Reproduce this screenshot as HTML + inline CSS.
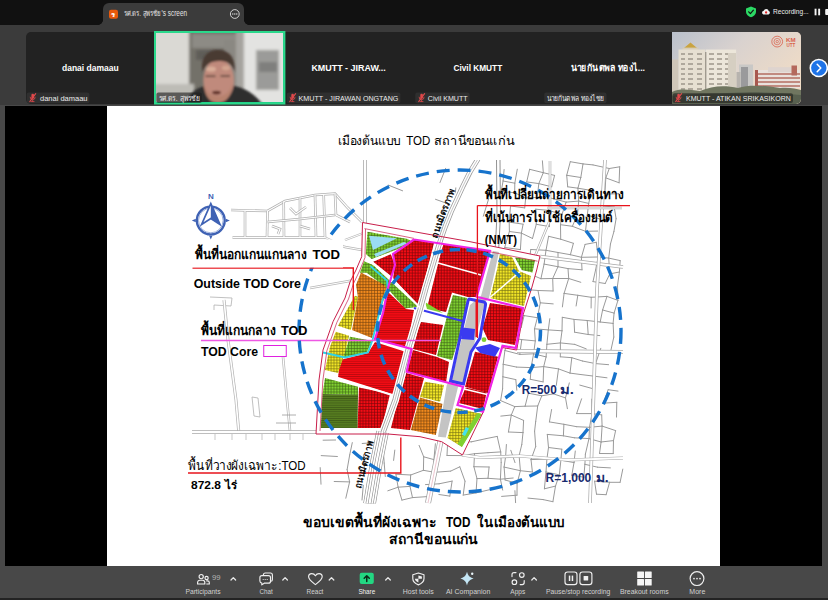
<!DOCTYPE html>
<html lang="th">
<head>
<meta charset="utf-8">
<title>Zoom Meeting</title>
<style>
*{box-sizing:border-box;margin:0;padding:0}
html,body{width:828px;height:600px;overflow:hidden;background:#3a3a3a;font-family:"Liberation Sans","Noto Sans CJK SC",sans-serif;color:#fff}
#app{position:relative;width:828px;height:600px;overflow:hidden;background:#484848}
#gbg{left:0;top:25px;width:828px;height:80px;background:#3b3b3b}
.abs{position:absolute}
#topbar{left:0;top:0;width:828px;height:25px;background:#111}
#tab{left:103px;top:3px;width:141px;height:23px;background:#3b3b3b;border-radius:6px 6px 0 0}
#tab:before,#tab:after{content:"";position:absolute;bottom:1px;width:5px;height:5px;background:radial-gradient(circle at 0 0,#111 4.6px,#3b3b3b 5.2px)}
#tab:before{left:-5px}
#tab:after{right:-5px;transform:scaleX(-1)}
.tile{top:32px;height:72px;background:#222}
#stage{left:5px;top:106px;width:817px;height:460px;background:#000}
#slide{left:107px;top:106px;width:613px;height:460px;background:#fff;color:#000}
#toolbar{left:0;top:566px;width:828px;height:34px;background:#484848;border-bottom:2px solid #232323}
</style>
</head>
<body>
<div id="app">
  <div id="topbar" class="abs"></div>
  <div id="gbg" class="abs"></div>
  <div id="tab" class="abs"></div>
  <div id="gallery">
    <div class="tile abs" style="left:26px;width:775px;border-radius:5px"></div>
    <div class="tile abs" id="t1" style="left:26px;width:129px;background:none">
    </div>
    <div class="tile abs" id="t2" style="left:154px;width:131px;top:31px;height:73px;background:#999;border:2px solid #23d18b"></div>
    <div class="tile abs" id="t3" style="left:285px;width:129px;background:none">
    </div>
    <div class="tile abs" id="t4" style="left:414px;width:129px;background:none">
    </div>
    <div class="tile abs" id="t5" style="left:543px;width:129px;background:none">
    </div>
    <div class="tile abs" id="t6" style="left:672px;width:129px;background:#c9b9a6;border-radius:0 5px 5px 0;overflow:hidden">
    </div>
  </div>
  <div id="stage" class="abs"></div>
  <div id="slide" class="abs"></div>
  <div id="toolbar" class="abs"></div>
  <svg id="map" class="abs" style="left:0;top:0" width="828" height="600" viewBox="0 0 828 600">
<!--MAP_START-->
<defs><pattern id="grid" width="2.9" height="2.9" patternUnits="userSpaceOnUse"><path d="M0 0.4H2.9M0.4 0V2.9" stroke="#000" stroke-width="0.7" opacity="0.5"/></pattern>
<pattern id="hl" width="2.6" height="2.2" patternUnits="userSpaceOnUse"><path d="M0 0.4H2.6" stroke="#000" stroke-width="0.6" opacity="0.36"/></pattern></defs>
<clipPath id="mapclip"><rect x="186" y="160" width="446" height="343.5"/></clipPath><g clip-path="url(#mapclip)">
<path d="M504.1 169.5L503.1 181.0M503.1 181.0L514.8 183.2M503.1 181.0L501.2 191.3M501.2 191.3L514.7 192.8M517.3 169.2L514.8 183.2M514.8 183.2L514.7 192.8M514.7 192.8L525.7 197.9M510.5 206.0L524.7 207.9M510.5 206.0L509.2 222.1M509.2 222.1L523.1 224.2M509.2 222.1L509.4 231.5M509.4 231.5L521.4 233.1M509.4 231.5L504.7 247.5M504.7 247.5L520.4 249.6M505.6 258.8L517.2 259.1M503.2 284.7L501.7 298.6M529.6 169.3L543.3 172.7M529.6 169.3L526.7 181.9M526.7 181.9L538.8 183.6M525.7 197.9L537.3 197.4M525.7 197.9L524.7 207.9M523.1 224.2L521.4 233.1M521.4 233.1L532.5 238.5M521.4 233.1L520.4 249.6M514.7 273.6L530.7 274.4M514.7 273.6L516.1 287.4M515.0 298.4L510.5 313.4M510.5 313.4L524.1 315.6M510.6 324.9L521.2 327.5M510.6 324.9L509.2 337.6M509.2 337.6L521.7 339.6M509.2 337.6L504.9 350.5M504.9 350.5L519.8 354.4M504.9 350.5L503.2 364.3M503.2 364.3L516.6 367.1M503.2 364.3L502.9 376.8M502.9 376.8L515.8 379.6M502.9 376.8L502.6 388.8M502.6 388.8L500.6 400.6M500.6 400.6L514.8 406.6M500.8 416.1L511.3 415.0M542.4 160.8L543.3 172.7M543.3 172.7L554.6 175.4M543.3 172.7L538.8 183.6M538.8 183.6L551.7 186.8M538.8 183.6L537.3 197.4M535.8 209.2L548.6 210.4M535.8 209.2L536.3 224.3M536.3 224.3L549.5 226.6M536.3 224.3L532.5 238.5M530.8 249.5L546.0 250.3M530.8 249.5L528.9 263.7M530.7 274.4L540.9 278.7M530.7 274.4L528.4 289.7M528.4 289.7L538.0 290.5M524.1 315.6L537.4 317.7M524.1 315.6L521.2 327.5M521.7 339.6L535.3 340.9M521.7 339.6L519.8 354.4M519.8 354.4L533.6 353.8M516.6 367.1L531.1 367.6M515.8 379.6L516.8 390.2M514.8 406.6L525.1 406.2M514.8 406.6L511.3 415.0M511.3 415.0L523.6 420.4M511.3 415.0L508.4 432.0M508.4 432.0L523.0 432.6M506.4 444.5L505.6 456.7M505.6 456.7L519.1 455.7M505.6 456.7L504.1 467.1M504.1 467.1L520.4 470.7M504.1 467.1L505.1 480.0M505.1 480.0L517.1 483.4M501.6 496.4L517.0 495.2M554.6 175.4L551.7 186.8M550.8 198.1L566.1 202.1M550.8 198.1L548.6 210.4M548.6 210.4L562.0 214.4M548.6 210.4L549.5 226.6M548.6 236.3L560.7 239.2M548.6 236.3L546.0 250.3M546.0 250.3L558.0 252.5M546.0 250.3L544.1 264.1M544.1 264.1L558.0 266.7M544.1 264.1L540.9 278.7M540.9 278.7L552.7 278.5M538.0 290.5L553.1 291.0M538.0 290.5L540.3 302.8M540.3 302.8L553.2 303.9M540.3 302.8L537.4 317.7M537.4 317.7L534.5 328.8M534.5 328.8L548.3 329.9M534.5 328.8L535.3 340.9M535.3 340.9L533.6 353.8M533.6 353.8L546.1 356.9M533.6 353.8L531.1 367.6M531.1 367.6L543.7 366.6M531.1 367.6L530.3 379.3M530.3 379.3L543.1 381.9M528.4 393.2L541.8 395.8M528.4 393.2L525.1 406.2M525.1 406.2L537.7 406.0M523.6 420.4L523.0 432.6M523.0 432.6L521.8 444.5M521.8 444.5L519.1 455.7M519.1 455.7L520.4 470.7M520.4 470.7L532.4 472.0M520.4 470.7L517.1 483.4M517.1 483.4L517.0 495.2M570.3 161.7L583.0 163.9M570.3 161.7L566.7 175.3M566.7 175.3L580.8 177.5M566.7 175.3L567.7 186.8M567.7 186.8L577.9 188.2M566.1 202.1L578.7 201.1M566.1 202.1L562.0 214.4M562.0 214.4L560.5 224.7M560.5 224.7L572.4 226.3M560.5 224.7L560.7 239.2M560.7 239.2L573.4 243.3M558.0 252.5L570.4 254.7M558.0 252.5L558.0 266.7M558.0 266.7L568.0 268.6M558.0 266.7L552.7 278.5M552.7 278.5L568.7 278.5M552.7 278.5L553.1 291.0M549.8 318.7L548.3 329.9M548.3 329.9L562.0 330.8M548.3 329.9L546.9 344.3M546.9 344.3L560.4 342.9M546.9 344.3L546.1 356.9M546.1 356.9L543.7 366.6M543.7 366.6L558.5 368.9M543.7 366.6L543.1 381.9M541.8 395.8L553.5 393.9M541.8 395.8L537.7 406.0M537.7 406.0L535.7 421.5M535.7 421.5L534.6 431.2M534.6 431.2L535.7 446.5M535.7 446.5L531.0 459.6M531.0 459.6L546.9 459.0M531.0 459.6L532.4 472.0M528.0 498.1L543.2 499.6M583.0 163.9L593.0 164.9M583.0 163.9L580.8 177.5M580.8 177.5L577.9 188.2M577.9 188.2L591.6 190.5M577.9 188.2L578.7 201.1M578.7 201.1L588.7 203.4M578.7 201.1L577.5 214.3M577.5 214.3L572.4 226.3M572.4 226.3L585.5 231.3M573.4 243.3L570.4 254.7M570.4 254.7L581.4 257.3M568.0 268.6L582.0 269.8M568.0 268.6L568.7 278.5M568.7 278.5L580.8 282.3M568.7 278.5L564.1 293.4M564.1 293.4L577.8 295.3M564.1 293.4L562.4 306.9M562.3 317.3L574.0 319.4M562.3 317.3L562.0 330.8M562.0 330.8L560.4 342.9M560.4 342.9L574.8 344.4M560.4 342.9L560.3 356.8M560.3 356.8L571.8 357.7M558.5 368.9L570.0 373.1M558.5 368.9L556.3 385.4M553.5 393.9L565.5 397.9M551.6 409.5L549.4 421.9M549.4 421.9L563.9 424.3M547.3 434.4L563.4 435.8M547.3 434.4L548.5 447.5M548.5 447.5L561.8 449.2M548.5 447.5L546.9 459.0M546.9 459.0L560.9 460.2M546.9 459.0L546.0 472.0M546.0 472.0L559.3 474.9M546.0 472.0L544.4 488.8M544.4 488.8L555.5 486.1M543.2 499.6L552.9 501.7M593.0 164.9L609.3 168.5M591.6 190.5L588.7 203.4M588.7 203.4L587.3 215.1M587.3 215.1L602.6 219.9M587.3 215.1L585.5 231.3M585.5 231.3L597.6 231.1M585.1 244.4L596.3 242.3M585.1 244.4L581.4 257.3M581.4 257.3L598.1 257.0M581.4 257.3L582.0 269.8M577.8 295.3L591.2 297.3M577.8 295.3L576.1 306.0M574.0 319.4L587.2 320.5M574.0 319.4L574.6 332.2M574.6 332.2L588.2 334.5M574.8 344.4L586.3 348.9M571.8 357.7L582.4 361.0M571.8 357.7L570.0 373.1M570.0 373.1L580.5 374.5M569.3 382.9L565.5 397.9M565.5 397.9L567.4 408.7M563.9 424.3L576.7 426.7M563.9 424.3L563.4 435.8M563.4 435.8L574.4 437.8M561.8 449.2L560.9 460.2M560.9 460.2L574.0 462.6M560.9 460.2L559.3 474.9M559.3 474.9L555.5 486.1M555.5 486.1L552.9 501.7M609.3 168.5L619.7 166.8M609.3 168.5L605.8 177.9M605.8 177.9L619.1 182.8M605.8 177.9L604.9 194.2M604.9 194.2L618.7 193.7M602.1 205.9L614.2 207.0M602.1 205.9L602.6 219.9M596.3 242.3L598.1 257.0M598.1 257.0L608.7 258.1M598.1 257.0L595.6 269.9M595.6 269.9L593.0 281.6M593.0 281.6L605.2 283.5M591.2 297.3L607.0 296.4M591.2 297.3L591.1 308.0M587.2 320.5L600.2 322.0M587.2 320.5L588.2 334.5M588.2 334.5L599.8 335.6M582.4 361.0L595.6 363.6M580.5 374.5L595.2 376.3M579.8 385.1L594.4 389.1M581.6 398.8L576.6 413.6M576.6 413.6L592.0 413.6M576.7 426.7L589.5 427.3M574.4 437.8L589.0 438.6M575.3 451.0L574.0 462.6M574.0 462.6L571.8 475.3M571.8 475.3L583.8 477.2M619.7 166.8L619.1 182.8M614.2 207.0L616.1 218.7M616.1 218.7L613.9 231.6M613.9 231.6L610.5 243.8M610.5 243.8L608.7 258.1M608.7 258.1L620.2 260.6M608.7 258.1L609.8 273.9M609.8 273.9L619.4 272.0M609.8 273.9L605.2 283.5M607.0 296.4L617.9 300.4M607.0 296.4L602.6 310.0M602.6 310.0L614.1 313.1M602.6 310.0L600.2 322.0M600.2 322.0L613.1 323.4M600.8 348.3L595.6 363.6M595.6 363.6L608.6 364.7M595.6 363.6L595.2 376.3M595.2 376.3L607.0 377.8M595.2 376.3L594.4 389.1M591.8 399.1L592.0 413.6M592.0 413.6L601.7 414.9M592.0 413.6L589.5 427.3M589.5 427.3L602.1 426.1M589.5 427.3L589.0 438.6M589.0 438.6L601.1 442.0M589.0 438.6L585.4 454.1M585.4 454.1L584.9 464.3M584.9 464.3L597.6 467.2M584.9 464.3L583.8 477.2M620.2 260.6L619.4 272.0M619.4 272.0L617.5 285.6M617.5 285.6L617.9 300.4M617.9 300.4L614.1 313.1M614.1 313.1L613.1 323.4M613.1 323.4L613.8 337.1M613.8 337.1L610.8 350.8M608.2 389.7L618.0 391.1M608.2 389.7L603.1 403.2M603.1 403.2L616.8 402.3M601.7 414.9L602.1 426.1M602.1 426.1L615.6 430.6M602.1 426.1L601.1 442.0M601.1 442.0L613.5 440.6M601.1 442.0L599.5 453.5M599.5 453.5L613.2 453.6M597.6 467.2L610.4 467.9M594.6 481.2L609.6 482.3M594.6 481.2L596.5 494.2M596.5 494.2L606.1 494.7M616.8 402.3L616.5 417.1M615.6 430.6L613.5 440.6M613.5 440.6L613.2 453.6M609.6 482.3L620.1 482.3M609.6 482.3L606.1 494.7M622.8 469.1L620.1 482.3M383.4 452.1L384.2 463.1M384.2 463.1L385.3 476.5M387.8 490.8L398.1 487.2M394.8 450.1L393.6 460.4M395.9 474.2L410.7 475.0M395.9 474.2L398.1 487.2M398.1 487.2L410.0 486.4M398.1 487.2L401.9 500.1M401.9 500.1L412.5 497.6M410.7 475.0L423.4 470.3M410.7 475.0L410.0 486.4M410.0 486.4L412.5 497.6M412.5 497.6L427.5 496.6M419.1 445.4L423.7 456.8M423.7 456.8L433.9 459.6M423.7 456.8L423.4 470.3M423.4 470.3L434.5 472.3M425.5 484.6L439.1 483.8M435.4 443.7L433.9 459.6M433.9 459.6L434.5 472.3M434.5 472.3L450.7 471.1M439.1 483.8L452.1 481.1M438.9 494.5L449.8 496.1M447.6 443.5L457.3 442.3M447.6 443.5L447.0 455.5M447.0 455.5L462.2 455.6M450.7 471.1L459.8 466.8M452.1 481.1L449.8 496.1M457.3 442.3L471.6 441.8M457.3 442.3L462.2 455.6M462.2 455.6L474.5 453.7M459.8 466.8L465.0 481.2M465.0 481.2L463.2 495.1M463.2 495.1L476.0 492.9M471.6 441.8L486.2 438.6M474.5 453.7L488.0 452.7M474.5 453.7L473.9 466.7M473.9 466.7L489.1 467.0M473.9 466.7L477.0 478.6M477.0 478.6L488.0 478.3M477.0 478.6L476.0 492.9M476.0 492.9L489.6 489.7M486.2 438.6L497.2 436.4M488.0 452.7L500.7 451.9M489.1 467.0L488.0 478.3M488.0 478.3L500.4 479.2M497.2 436.4L500.7 451.9M500.7 451.9L501.2 462.4M501.2 462.4L500.4 479.2M500.4 479.2L513.2 478.0M500.4 479.2L502.7 490.1M510.8 450.3L515.0 462.6M514.9 490.7L515.6 502.7M388.3 185.1L402.6 190.8M445.7 168.3L440.0 182.5M435.5 199.3L454.4 206.1M455.8 187.9L454.4 206.1M445.8 221.5L440.2 238.4M488.8 198.4L483.3 216.2M323.1 440.2L335.6 440.0M321.2 455.6L337.4 456.5M320.2 467.6L321.0 484.2M334.2 481.5L349.6 481.9M352.3 442.6L349.7 454.9M349.7 454.9L347.1 469.6M347.1 469.6L349.6 481.9M349.6 481.9L345.8 498.2M362.2 443.5L376.9 442.4M363.5 454.7L364.5 470.5M363.3 485.3L362.0 500.0M375.4 471.9L378.0 484.2M378.0 484.2L373.6 500.8" fill="none" stroke="#9a9a9a" stroke-width="1" stroke-linecap="round"/>
<polyline points="231,210 267.5,211 285,201 315,195 335,193.7 347.5,207.5 362,222" fill="none" stroke="#b0b0b0" stroke-width="2.6" />
<polyline points="231,210 267.5,211 285,201 315,195 335,193.7 347.5,207.5 362,222" fill="none" stroke="#fff" stroke-width="1.2" />
<polyline points="232.5,237.5 325,237.5" fill="none" stroke="#b0b0b0" stroke-width="2.6" />
<polyline points="232.5,237.5 325,237.5" fill="none" stroke="#fff" stroke-width="1.2" />
<polyline points="245,211 245,237" fill="none" stroke="#b0b0b0" stroke-width="2.6" />
<polyline points="245,211 245,237" fill="none" stroke="#fff" stroke-width="1.2" />
<polyline points="267.5,211 267,237" fill="none" stroke="#b0b0b0" stroke-width="2.6" />
<polyline points="267.5,211 267,237" fill="none" stroke="#fff" stroke-width="1.2" />
<polyline points="283.7,202 284,237" fill="none" stroke="#b0b0b0" stroke-width="2.6" />
<polyline points="283.7,202 284,237" fill="none" stroke="#fff" stroke-width="1.2" />
<polyline points="300,198 300,237" fill="none" stroke="#b0b0b0" stroke-width="2.6" />
<polyline points="300,198 300,237" fill="none" stroke="#fff" stroke-width="1.2" />
<polyline points="315,195 316,237" fill="none" stroke="#b0b0b0" stroke-width="2.6" />
<polyline points="315,195 316,237" fill="none" stroke="#fff" stroke-width="1.2" />
<polyline points="323.7,195 325,237" fill="none" stroke="#b0b0b0" stroke-width="2.6" />
<polyline points="323.7,195 325,237" fill="none" stroke="#fff" stroke-width="1.2" />
<polyline points="267.5,222 300,219 335,215" fill="none" stroke="#b0b0b0" stroke-width="2.6" />
<polyline points="267.5,222 300,219 335,215" fill="none" stroke="#fff" stroke-width="1.2" />
<polyline points="335,193.7 336,215 350,222" fill="none" stroke="#b0b0b0" stroke-width="2.6" />
<polyline points="335,193.7 336,215 350,222" fill="none" stroke="#fff" stroke-width="1.2" />
<polyline points="290,208 296,214 306,207" fill="none" stroke="#b0b0b0" stroke-width="2.6" />
<polyline points="290,208 296,214 306,207" fill="none" stroke="#fff" stroke-width="1.2" />
<polyline points="272,226 280,229 278,234" fill="none" stroke="#b0b0b0" stroke-width="2.6" />
<polyline points="272,226 280,229 278,234" fill="none" stroke="#fff" stroke-width="1.2" />
<polyline points="300,226 310,229" fill="none" stroke="#b0b0b0" stroke-width="2.6" />
<polyline points="300,226 310,229" fill="none" stroke="#fff" stroke-width="1.2" />
<polyline points="310,288 355,280" fill="none" stroke="#b8b8b8" stroke-width="2.4" />
<polyline points="310,288 355,280" fill="none" stroke="#fff" stroke-width="1" />
<polyline points="345,240 365,232.5" fill="none" stroke="#b8b8b8" stroke-width="2.4" />
<polyline points="345,240 365,232.5" fill="none" stroke="#fff" stroke-width="1" />
<polyline points="325,237.5 345,247 362,250" fill="none" stroke="#b8b8b8" stroke-width="2.4" />
<polyline points="325,237.5 345,247 362,250" fill="none" stroke="#fff" stroke-width="1" />
<polyline points="210,297 232,298 231,306 214,305 214,310" fill="none" stroke="#b0b0b0" stroke-width="0.8" />
<polyline points="224,300 228,340 236,400 238.7,431" fill="none" stroke="#b4b4b4" stroke-width="3" />
<polyline points="224,300 228,340 236,400 238.7,431" fill="none" stroke="#fff" stroke-width="1.6" />
<polyline points="283,357 287,400 290,431" fill="none" stroke="#b4b4b4" stroke-width="2.6" />
<polyline points="283,357 287,400 290,431" fill="none" stroke="#fff" stroke-width="1.2" />
<polyline points="252,397 258,398 260,417 254,416 252,397" fill="none" stroke="#b0b0b0" stroke-width="0.8" />
<polyline points="282,415 296,415" fill="none" stroke="#999" stroke-width="0.8" />
<polyline points="276,423 296,423" fill="none" stroke="#999" stroke-width="0.8" />
<polyline points="192,432 316,432" fill="none" stroke="#a8a8a8" stroke-width="3.4" />
<polyline points="192,432 316,432" fill="none" stroke="#fff" stroke-width="2" />
<polyline points="215,434 215,440" fill="none" stroke="#b0b0b0" stroke-width="0.7" />
<polyline points="232,434 232,440" fill="none" stroke="#b0b0b0" stroke-width="0.7" />
<polyline points="246,434 246,440" fill="none" stroke="#b0b0b0" stroke-width="0.7" />
<polyline points="262,434 262,440" fill="none" stroke="#b0b0b0" stroke-width="0.7" />
<polyline points="275,434 275,440" fill="none" stroke="#b0b0b0" stroke-width="0.7" />
<polyline points="290,434 290,440" fill="none" stroke="#b0b0b0" stroke-width="0.7" />
<polyline points="303,434 303,440" fill="none" stroke="#b0b0b0" stroke-width="0.7" />
<polyline points="365,160 365,223" fill="none" stroke="#a0a0a0" stroke-width="4" />
<polyline points="365,160 365,223" fill="none" stroke="#fff" stroke-width="2.6" />
<polyline points="540,256.5 623,267" fill="none" stroke="#a8a8a8" stroke-width="3.6" />
<polyline points="540,256.5 623,267" fill="none" stroke="#fff" stroke-width="2.2" />
<polyline points="517,351 623,352" fill="none" stroke="#a8a8a8" stroke-width="4" />
<polyline points="517,351 623,352" fill="none" stroke="#fff" stroke-width="2.6" />
<polyline points="605,160 597,290 590,503" fill="none" stroke="#a8a8a8" stroke-width="3.6" />
<polyline points="605,160 597,290 590,503" fill="none" stroke="#fff" stroke-width="2.2" />
<polyline points="462,455 480,457.5 520,456 568,460 623,458" fill="none" stroke="#a8a8a8" stroke-width="3.2" />
<polyline points="462,455 480,457.5 520,456 568,460 623,458" fill="none" stroke="#fff" stroke-width="1.8" />
<polyline points="550,161 550,220 535,256" fill="none" stroke="#b0b0b0" stroke-width="2.6" />
<polyline points="550,161 550,220 535,256" fill="none" stroke="#fff" stroke-width="1.2" />
<polyline points="547,208 622,208" fill="none" stroke="#b0b0b0" stroke-width="2.4" />
<polyline points="547,208 622,208" fill="none" stroke="#fff" stroke-width="1" />
<polyline points="496.5,160 497,215 495,252" fill="none" stroke="#777" stroke-width="0.8" />
<polyline points="500,160 500.5,215 498.5,252" fill="none" stroke="#777" stroke-width="0.8" />
<polyline points="441.5,436 428,503" fill="none" stroke="#9a9a9a" stroke-width="6" />
<polyline points="441.5,436 428,503" fill="none" stroke="#fff" stroke-width="4.6" />
<polyline points="441.5,436 428,503" fill="none" stroke="#e0a0b0" stroke-width="0.6" />
<polygon points="362.5,222.5 470,241.7 540,256 536.7,270 531.7,288 523,315 516.7,350 502,347.5 492.5,380 483,412.5 462.5,455 441.7,441.7 420,436.7 388,434 316,434 319,380 323,350 333,321.7 345,298 350,282 356,270 361.7,256.7" fill="#fff" />
<polygon points="367.5,231.7 407.5,239 411,241 400,248.3 371.7,259 365.8,254" fill="#80d030" />
<polygon points="373.3,261.7 390.8,254.2 395,265 391,276" fill="#f40c14" />
<polygon points="364,261.3 373,265 389.3,280.2 418,306.8 405,308.4 388,289 366.7,272.8 360,272.8" fill="#80d030" />
<polygon points="361,272.6 384,284.4 387,289 372,338 352,330 358,297 356,285" fill="#f28a1e" />
<polygon points="355,295.8 358,296.7 350.8,330 338,325.8 348,308" fill="#f2e626" />
<polygon points="414,240 434,243 422,290 419,305 393,279 395,265 393,254" fill="#f40c14" />
<polygon points="388,292 406,309 414,310 407,347 375,339 383,313" fill="#f40c14" />
<polygon points="443,244 490,251 477,297 468,297 452,292.5 446,312 427,308 432,288" fill="#f40c14" />
<polygon points="453,295 467,298 463,325 452,360 437,356 448,312" fill="#80d030" />
<polygon points="490,303 523,308 515,345 488,340 482.5,328" fill="#f40c14" />
<polygon points="475,351.7 498,356.7 488,393 465,386.7" fill="#f40c14" />
<polygon points="465.8,387.5 486.7,392.5 483,409 459,403" fill="#f40c14" />
<polygon points="500,254 512,257 519,271 531,276 524,306 490,298 497,270" fill="#f2e626" />
<polygon points="515,257.5 535,260 532.5,272.5 521.7,270" fill="#80d030" />
<polygon points="340,360 368,353 375,342 406,352 396,392 392,394 338,378" fill="#f40c14" />
<polygon points="359,387.5 390,394 381.7,428 357.5,428" fill="#f40c14" />
<polygon points="325,378 358,386.7 358,395 322.5,394" fill="#80d030" />
<polygon points="322.5,394 358,395 357.5,428 320.8,428" fill="#567c20" />
<polygon points="335.8,331.7 349,335.8 345,353 338,373 325,370 330,346.7" fill="#f2e626" />
<polygon points="350,336.7 371.7,340.8 366.7,353 343,358 346.7,346.7" fill="#80d030" />
<polygon points="413,350 437,357 449,362 446,382 407,371.7" fill="#f40c14" />
<polygon points="421,322 443,325 436,355 413,349 418,330" fill="#f40c14" />
<polygon points="406,373 424,378 410,430 391,428 398,400" fill="#f40c14" />
<polygon points="425,381.7 444,385 440,401.7 420,396.7" fill="#f2e626" />
<polygon points="420,397.5 442.5,404 435.8,435 410.8,430" fill="#f28a1e" />
<polygon points="455.8,408 481.7,414 461.7,446.7 447.5,438" fill="#f2e626" />
<polygon points="367.5,231.7 407.5,239 411,241 400,248.3 371.7,259 365.8,254" fill="url(#grid)" />
<polygon points="373.3,261.7 390.8,254.2 395,265 391,276" fill="url(#grid)" />
<polygon points="364,261.3 373,265 389.3,280.2 418,306.8 405,308.4 388,289 366.7,272.8 360,272.8" fill="url(#grid)" />
<polygon points="361,272.6 384,284.4 387,289 372,338 352,330 358,297 356,285" fill="url(#grid)" />
<polygon points="355,295.8 358,296.7 350.8,330 338,325.8 348,308" fill="url(#grid)" />
<polygon points="414,240 434,243 422,290 419,305 393,279 395,265 393,254" fill="url(#grid)" />
<polygon points="388,292 406,309 414,310 407,347 375,339 383,313" fill="url(#hl)" />
<polygon points="443,244 490,251 477,297 468,297 452,292.5 446,312 427,308 432,288" fill="url(#grid)" />
<polygon points="453,295 467,298 463,325 452,360 437,356 448,312" fill="url(#grid)" />
<polygon points="490,303 523,308 515,345 488,340 482.5,328" fill="url(#grid)" />
<polygon points="475,351.7 498,356.7 488,393 465,386.7" fill="url(#grid)" />
<polygon points="465.8,387.5 486.7,392.5 483,409 459,403" fill="url(#grid)" />
<polygon points="500,254 512,257 519,271 531,276 524,306 490,298 497,270" fill="url(#grid)" />
<polygon points="515,257.5 535,260 532.5,272.5 521.7,270" fill="url(#grid)" />
<polygon points="340,360 368,353 375,342 406,352 396,392 392,394 338,378" fill="url(#hl)" />
<polygon points="359,387.5 390,394 381.7,428 357.5,428" fill="url(#grid)" />
<polygon points="325,378 358,386.7 358,395 322.5,394" fill="url(#grid)" />
<polygon points="322.5,394 358,395 357.5,428 320.8,428" fill="url(#hl)" />
<polygon points="335.8,331.7 349,335.8 345,353 338,373 325,370 330,346.7" fill="url(#grid)" />
<polygon points="350,336.7 371.7,340.8 366.7,353 343,358 346.7,346.7" fill="url(#grid)" />
<polygon points="413,350 437,357 449,362 446,382 407,371.7" fill="url(#grid)" />
<polygon points="421,322 443,325 436,355 413,349 418,330" fill="url(#grid)" />
<polygon points="406,373 424,378 410,430 391,428 398,400" fill="url(#grid)" />
<polygon points="425,381.7 444,385 440,401.7 420,396.7" fill="url(#grid)" />
<polygon points="420,397.5 442.5,404 435.8,435 410.8,430" fill="url(#grid)" />
<polygon points="455.8,408 481.7,414 461.7,446.7 447.5,438" fill="url(#grid)" />
<polygon points="369,235.8 397,238.3 373,250" fill="#9adcf2" />
<polygon points="374,254 404,242 407,243.5 376,257" fill="#9adcf2" />
<polygon points="477.5,413 482,414 462,447 457.5,444" fill="#80d030" />
<polygon points="466,427 469,428.5 465,436 462,434.5" fill="#46e0ee" />
<polygon points="493,251 499,252 489,298 485,302 465,380 458,387 445.8,437.5 438,436.7 446.7,385 452,378 470,305 481,296" fill="#c4c4c4" />
<path d="M469 299 L484 302 Q486 303 485.5 305 L480 338 L471 352 L463.5 384 L450.5 381 L468 301 Q468.5 299 469 299Z" fill="none" stroke="#3a3af0" stroke-width="3"/>
<polygon points="462.5,327.5 475,329 474,340 461,339" fill="#3a3af0" />
<polygon points="475,347.5 490,344 500,348 495,356.7 480,353" fill="#3a3af0" />
<circle cx="484" cy="339.7" r="2.4" fill="#80d030"/>
<polygon points="425,302 443,313 427,309" fill="#80d030" />
<polyline points="414,308 465,321.7" fill="none" stroke="#3a3af0" stroke-width="2.2" />
<polyline points="478,159 470,172 463,186 457.5,198 451,212 445.5,226 441.6,237 438.3,247 426,288 420,310 408,350 395,400 382.5,434" fill="none" stroke="#fff" stroke-width="8" />
<polyline points="478,159 470,172 463,186 457.5,198 451,212 445.5,226 441.6,237 438.3,247 426,288 420,310 408,350 395,400 382.5,434" fill="none" stroke="#9a9a9a" stroke-width="5.2" />
<polyline points="478,159 470,172 463,186 457.5,198 451,212 445.5,226 441.6,237 438.3,247 426,288 420,310 408,350 395,400 382.5,434" fill="none" stroke="#fff" stroke-width="3.6" />
<polyline points="478,159 470,172 463,186 457.5,198 451,212 445.5,226 441.6,237 438.3,247 426,288 420,310 408,350 395,400 382.5,434" fill="none" stroke="#aaa" stroke-width="0.7" />
<polyline points="382.5,432 376.5,462 369.5,504" fill="none" stroke="#8c8c8c" stroke-width="12.6" />
<polyline points="382.5,432 376.5,462 369.5,504" fill="none" stroke="#fff" stroke-width="11.4" />
<polyline points="382.5,432 376.5,462 369.5,504" fill="none" stroke="#8c8c8c" stroke-width="8" />
<polyline points="382.5,432 376.5,462 369.5,504" fill="none" stroke="#fff" stroke-width="6.8" />
<polyline points="382.5,432 376.5,462 369.5,504" fill="none" stroke="#8c8c8c" stroke-width="3.4" />
<polyline points="382.5,432 376.5,462 369.5,504" fill="none" stroke="#fff" stroke-width="2.2" />
<polyline points="368,260 392,278 420,308" fill="none" stroke="#fff" stroke-width="1.6" />
<polyline points="438,263 481,275" fill="none" stroke="#fff" stroke-width="1.6" />
<polyline points="335.8,329 373,340" fill="none" stroke="#fff" stroke-width="2" />
<polyline points="335,377 392,395" fill="none" stroke="#fff" stroke-width="2" />
<polyline points="490,297.5 520,271.7" fill="none" stroke="#fff" stroke-width="1.6" />
<polyline points="464,389 487,394.5" fill="none" stroke="#fff" stroke-width="1.4" />
<polygon points="423,314 443,318.5 442,322.5 422,318" fill="#fff" />
<polyline points="370.5,266.3 387,280.6 387.6,288 382.5,300 372.5,340 368,352.5 345,357.5 323,352.5" fill="none" stroke="#2fd2e6" stroke-width="1.8" />
<polyline points="362.5,222.5 470,241.7 540,256 536.7,270 531.7,288 523,315 516.7,350 502,347.5 492.5,380 483,412.5 462.5,455 441.7,441.7 420,436.7 388,434 316,434 319,380 323,350 333,321.7 345,298 350,282 356,270 361.7,256.7 362.5,222.5" fill="none" stroke="#c81e4a" stroke-width="1" />
<polyline points="364.5,228.6 414,238.4" fill="none" stroke="#c81e4a" stroke-width="0.7" />
<polyline points="490,251.8 537.5,261.2" fill="none" stroke="#c81e4a" stroke-width="0.7" />
<polyline points="365.5,229 365,257.5 359.5,271 353.5,283.5 348.5,299 336.8,322.5 326.8,351 322.8,381 320,431" fill="none" stroke="#c81e4a" stroke-width="0.7" />
<polyline points="414,239.5 450,245 490,250.8 476.7,296.7 523,308 515.8,348 502.5,345.8 492.5,380 483,411.7 457.5,405 463,386.7 406.7,371.7 411.7,349 375,339 383,313 388,288 395,265 393,254 414,239.5" fill="none" stroke="#f022e6" stroke-width="2.2" />
<polyline points="201,340.5 441,340.5" fill="none" stroke="#ee58e4" stroke-width="1.5" />
<circle cx="460" cy="331" r="161" fill="none" stroke="#1673cc" stroke-width="3.4" stroke-dasharray="13 8"/>
<circle cx="459" cy="331" r="81.5" fill="none" stroke="#1673cc" stroke-width="3.5" stroke-dasharray="10.5 6.5"/>
<polyline points="192.5,268 353.3,268 353.3,310" fill="none" stroke="#e8141c" stroke-width="1.4" />
<polyline points="477.4,205.6 630,205.6" fill="none" stroke="#e8141c" stroke-width="1.4" />
<polyline points="477.4,205.6 477.4,338" fill="none" stroke="#e8141c" stroke-width="1.3" />
<polyline points="476.7,300 476.7,337" fill="none" stroke="#e8141c" stroke-width="2.4" />
<polyline points="188,473 400.8,473 400.8,437.5" fill="none" stroke="#e8141c" stroke-width="1.4" />
<rect x="263.75" y="345.5" width="22.5" height="11" fill="none" stroke="#e020e0" stroke-width="1"/>
</g>
<rect x="190" y="239.5" width="153" height="28" fill="#fff"/>
<g font-family="'Liberation Sans','Noto Sans CJK SC',sans-serif">
<text x="337.8" y="145.3" font-size="12.4" font-weight="normal" fill="#000" textLength="63.4" lengthAdjust="spacingAndGlyphs" >เมืองต้นแบบ</text>
<text x="406.2" y="145.3" font-size="12.4" font-weight="normal" fill="#000" textLength="24.1" lengthAdjust="spacingAndGlyphs" >TOD</text>
<text x="434" y="145.3" font-size="12.4" font-weight="normal" fill="#000" textLength="80" lengthAdjust="spacingAndGlyphs" >สถานีขอนแก่น</text>
<text x="195" y="258.7" font-size="13.5" font-weight="bold" fill="#000" textLength="112.5" lengthAdjust="spacingAndGlyphs" >พื้นที่นอกแกนแกนลาง</text>
<text x="312.5" y="258.7" font-size="13.5" font-weight="bold" fill="#000" textLength="27.5" lengthAdjust="spacingAndGlyphs" >TOD</text>
<text x="193.7" y="287.5" font-size="12" font-weight="bold" fill="#000" textLength="107.3" lengthAdjust="spacingAndGlyphs" >Outside TOD Core</text>
<text x="201" y="334.5" font-size="13.5" font-weight="bold" fill="#000" textLength="75" lengthAdjust="spacingAndGlyphs" >พื้นที่แกนกลาง</text>
<text x="281" y="334.5" font-size="13.5" font-weight="bold" fill="#000" textLength="26.5" lengthAdjust="spacingAndGlyphs" >TOD</text>
<text x="201" y="355.5" font-size="12.5" font-weight="bold" fill="#000" textLength="57" lengthAdjust="spacingAndGlyphs" >TOD Core</text>
<text x="188" y="470" font-size="13" font-weight="normal" fill="#000" textLength="89" lengthAdjust="spacingAndGlyphs" >พื้นที่วางผังเฉพาะ</text>
<text x="278.2" y="470" font-size="13" font-weight="normal" fill="#000" textLength="27.4" lengthAdjust="spacingAndGlyphs" >:TOD</text>
<text x="191" y="488.7" font-size="11.5" font-weight="bold" fill="#000" textLength="29.9" lengthAdjust="spacingAndGlyphs" >872.8</text>
<text x="225" y="488.7" font-size="11.5" font-weight="bold" fill="#000" textLength="12" lengthAdjust="spacingAndGlyphs" >ไร่</text>
<text x="303.3" y="526.7" font-size="14" font-weight="bold" fill="#000" textLength="133.7" lengthAdjust="spacingAndGlyphs" >ขอบเขตพื้นที่ผังเฉพาะ</text>
<text x="445.9" y="526.7" font-size="14" font-weight="bold" fill="#000" textLength="24.5" lengthAdjust="spacingAndGlyphs" >TOD</text>
<text x="477.4" y="526.7" font-size="14" font-weight="bold" fill="#000" textLength="87.6" lengthAdjust="spacingAndGlyphs" >ในเมืองต้นแบบ</text>
<text x="388.8" y="543.5" font-size="14" font-weight="bold" fill="#000" textLength="89.6" lengthAdjust="spacingAndGlyphs" >สถานีขอนแก่น</text>
<text x="484.8" y="199" font-size="13.5" font-weight="bold" fill="#000" textLength="139.2" lengthAdjust="spacingAndGlyphs" >พื้นที่เปลี่ยนถ่ายการเดินทาง</text>
<text x="484.8" y="221.7" font-size="13.5" font-weight="bold" fill="#000" textLength="128.2" lengthAdjust="spacingAndGlyphs" >ที่เน้นการไม่ใช้เครื่องยนต์</text>
<text x="484.8" y="243.5" font-size="13" font-weight="bold" fill="#000" textLength="32.2" lengthAdjust="spacingAndGlyphs" >(NMT)</text>
<text x="521.7" y="394" font-size="12" font-weight="bold" fill="#172a6e" textLength="35" lengthAdjust="spacingAndGlyphs" >R=500</text>
<text x="560" y="394" font-size="12" font-weight="bold" fill="#172a6e" textLength="14" lengthAdjust="spacingAndGlyphs" >ม.</text>
<text x="545.6" y="482" font-size="12" font-weight="bold" fill="#172a6e" textLength="45.7" lengthAdjust="spacingAndGlyphs" >R=1,000</text>
<text x="595.6" y="482" font-size="12" font-weight="bold" fill="#172a6e" textLength="13.1" lengthAdjust="spacingAndGlyphs" >ม.</text>
<text x="0" y="0" font-size="9.5" font-weight="bold" fill="#111" textLength="51" lengthAdjust="spacingAndGlyphs" transform="translate(437,238.5) rotate(-69.4)">ถนนมิตรภาพ</text>
<text x="0" y="0" font-size="10" font-weight="bold" fill="#111" textLength="49" lengthAdjust="spacingAndGlyphs" transform="translate(360.8,489) rotate(-74.6)">ถนนมิตรภาพ</text>
<text x="207.9" y="199.2" font-size="7.8" font-weight="bold" fill="#3f62b4" textLength="5.8" lengthAdjust="spacingAndGlyphs" >N</text>
</g>
<circle cx="210.8" cy="220.5" r="13.9" fill="#fff" stroke="#3f62b4" stroke-width="2.4"/>
<circle cx="210.8" cy="220.5" r="12.3" fill="none" stroke="#9fb2de" stroke-width="1"/>
<g fill="#3f62b4">
<path d="M210.8 239.5 l-1.8 -4 h3.6z"/>
<path d="M191.8 220.5 l4 -1.8 v3.6z"/>
<path d="M229.8 220.5 l-4 -1.8 v3.6z"/>
<path d="M210.8 203.6 L220 224.5 L210.8 218.5 L201.6 224.5Z" fill="#fff" stroke="#3f62b4" stroke-width="1.7" stroke-linejoin="miter"/>
<path d="M210.8 203 L220.4 225 L210.8 218.5Z"/>
</g>
<!--MAP_END-->
<!--UI_START-->
<g font-family="'Liberation Sans','Noto Sans CJK SC',sans-serif">
<rect x="109" y="9.7" width="9" height="9" rx="2" fill="#e8590c"/>
<text x="111.3" y="16.6" font-size="5.5" font-weight="bold" fill="#fff" textLength="4.2" lengthAdjust="spacingAndGlyphs" >ร</text>
<text x="123.9" y="16.2" font-size="8" font-weight="normal" fill="#e6e6e6" textLength="36.9" lengthAdjust="spacingAndGlyphs" >รศ.ดร. สุพรชัย</text>
<text x="161.6" y="16.2" font-size="8.6" font-weight="normal" fill="#e6e6e6" textLength="25.4" lengthAdjust="spacingAndGlyphs" >'s screen</text>
<circle cx="234.8" cy="14" r="4.4" fill="none" stroke="#e0e0e0" stroke-width="0.9"/>
<circle cx="232.8" cy="14" r="0.65" fill="#e8e8e8"/>
<circle cx="234.8" cy="14" r="0.65" fill="#e8e8e8"/>
<circle cx="236.8" cy="14" r="0.65" fill="#e8e8e8"/>
<path d="M751 6.6 L756 8.4 V12 C756 14.6 753.6 16.4 751 17.2 C748.4 16.4 746 14.6 746 12 V8.4Z" fill="#2bd964"/>
<path d="M748.7 11.8 l1.7 1.8 l3 -3.4" fill="none" stroke="#111" stroke-width="1.2" stroke-linecap="round" stroke-linejoin="round"/>
<path d="M763.4 14.4 a1.9 1.9 0 0 1 0.3 -3.7 a2.6 2.6 0 0 1 5 0.4 a1.7 1.7 0 0 1 -0.2 3.3Z" fill="#f2f2f2"/>
<circle cx="766.1" cy="12.5" r="1.15" fill="#e02828"/>
<text x="773" y="14.4" font-size="8" font-weight="normal" fill="#ececec" textLength="35.7" lengthAdjust="spacingAndGlyphs" >Recording...</text>
<rect x="814.6" y="8.7" width="1.9" height="6.6" fill="#f4f4f4"/><rect x="818.2" y="8.7" width="1.9" height="6.6" fill="#f4f4f4"/>
<rect x="825.2" y="9" width="6" height="6" rx="1" fill="#f4f4f4"/>
<defs><clipPath id="cv"><rect x="156" y="33" width="127" height="69"/></clipPath><clipPath id="ci"><path d="M672 32 H796 a5 5 0 0 1 5 5 V99 a5 5 0 0 1 -5 5 H672Z"/></clipPath>
<filter id="b1" x="-20%" y="-20%" width="140%" height="140%"><feGaussianBlur stdDeviation="1.6"/></filter><filter id="b2" x="-20%" y="-20%" width="140%" height="140%"><feGaussianBlur stdDeviation="0.9"/></filter><filter id="b3" x="-20%" y="-20%" width="140%" height="140%"><feGaussianBlur stdDeviation="0.45"/></filter>
<linearGradient id="sky" x1="0" y1="0" x2="1" y2="0.6"><stop offset="0" stop-color="#b9c0cb"/><stop offset="0.45" stop-color="#d9d2cf"/><stop offset="1" stop-color="#f0dcc6"/></linearGradient></defs>
<g clip-path="url(#cv)"><rect x="154" y="31" width="131" height="73" fill="#d6d5d0"/>
<g filter="url(#b1)">
<rect x="150" y="28" width="40" height="80" fill="#dad9d4"/>
<rect x="189" y="28" width="60" height="80" fill="#737169"/>
<rect x="192" y="34" width="50" height="14" fill="#8d8b85"/><rect x="196" y="50" width="44" height="10" fill="#5f5d58"/><rect x="224" y="40" width="18" height="60" fill="#8a8882"/><rect x="236" y="30" width="8" height="75" fill="#a5a39e"/>
<rect x="244" y="28" width="44" height="80" fill="#e3e3e1"/>
<rect x="256" y="50" width="23" height="40" fill="#9b9b99"/><rect x="259" y="62" width="18" height="10" fill="#7f7f7d"/>
<rect x="150" y="84" width="44" height="24" fill="#bdbcb6"/>
</g>
<g filter="url(#b2)">
<path d="M184 105 C189 95 195 88.5 203 86.5 L233 85.5 C245 88 255 94 263 105Z" fill="#2f2e2e"/>
<ellipse cx="218.7" cy="80.5" rx="15.4" ry="21.5" fill="#c08a7c"/>
<path d="M202.5 72 C200 58 207 50 218 50 C229.5 50 236 58 234.5 72 C232.5 64 227 60.5 219 61 C210.5 61 205 64.5 202.5 72Z" fill="#4a3a33"/>
<ellipse cx="211" cy="69" rx="5" ry="2.6" fill="#d9ad98"/><ellipse cx="226" cy="68" rx="4" ry="2.4" fill="#d2a48f"/>
<path d="M205.5 76.3 h10 M220.5 76 h9.5" stroke="#5a4238" stroke-width="1.5" fill="none"/>
<ellipse cx="216.5" cy="92.6" rx="4.4" ry="1.9" fill="#5e3028"/>
<path d="M204 84 C204 96 210 103 218 103 C226 103 232 96 232 84 C230 92 226 96 218 96 C210 96 206 92 204 84Z" fill="#b7826e"/>
</g></g>
<rect x="154.9" y="31.9" width="129.6" height="71.7" fill="none" stroke="#2bd98b" stroke-width="1.8"/>
<g clip-path="url(#ci)"><rect x="672" y="32" width="129" height="72" fill="url(#sky)"/>
<g filter="url(#b3)">
<rect x="672" y="59.5" width="6.5" height="34" fill="#cfc6b8"/>
<path d="M684 48 L690.5 42.5 L697 48Z" fill="#c9a33f"/><rect x="682.5" y="47.6" width="16" height="2.4" fill="#d8cdb6"/>
<rect x="678.5" y="49.5" width="26.5" height="44" fill="#e6dfd1"/>
<rect x="705.6" y="49.5" width="30.5" height="40" fill="#ece6da"/><rect x="705" y="52" width="1.4" height="40" fill="#a09a8f"/>
<rect x="728" y="53" width="8" height="36" fill="#d6cfc2"/>
<path d="M681 54 h4 M688 54 h5 M697 54 h5 M709 54 h5 M717 54 h5 M725 54 h3" stroke="#9d968a" stroke-width="1.5" fill="none"/>
<path d="M681 59 h4 M688 59 h5 M697 59 h5 M709 59 h5 M717 59 h5 M725 59 h3" stroke="#9d968a" stroke-width="1.5" fill="none"/>
<path d="M681 64 h4 M688 64 h5 M697 64 h5 M709 64 h5 M717 64 h5 M725 64 h3" stroke="#9d968a" stroke-width="1.5" fill="none"/>
<path d="M681 69 h4 M688 69 h5 M697 69 h5 M709 69 h5 M717 69 h5 M725 69 h3" stroke="#9d968a" stroke-width="1.5" fill="none"/>
<path d="M681 74 h4 M688 74 h5 M697 74 h5 M709 74 h5 M717 74 h5 M725 74 h3" stroke="#9d968a" stroke-width="1.5" fill="none"/>
<path d="M681 79 h4 M688 79 h5 M697 79 h5 M709 79 h5 M717 79 h5 M725 79 h3" stroke="#9d968a" stroke-width="1.5" fill="none"/>
<path d="M681 84 h4 M688 84 h5 M697 84 h5 M709 84 h5 M717 84 h5 M725 84 h3" stroke="#9d968a" stroke-width="1.5" fill="none"/>
<path d="M681 89 h4 M688 89 h5 M697 89 h5 M709 89 h5 M717 89 h5 M725 89 h3" stroke="#9d968a" stroke-width="1.5" fill="none"/>
<rect x="739" y="64.5" width="14" height="26" fill="#c9c8c6"/><rect x="741" y="67" width="7" height="22" fill="#9a9a9c"/><rect x="736.5" y="72" width="4" height="18" fill="#b7b3ae"/>
<rect x="755" y="70" width="45" height="18" fill="#e9e1dc"/><rect x="768" y="67.2" width="26" height="5" fill="#ded4cf"/><rect x="791.5" y="65.5" width="5.5" height="10" fill="#b4685c"/><rect x="755" y="70" width="3" height="18" fill="#a8594f"/>
<path d="M758 74 H800" stroke="#b36d62" stroke-width="1.3"/>
<path d="M758 78 H800" stroke="#b36d62" stroke-width="1.3"/>
<path d="M758 82 H800" stroke="#b36d62" stroke-width="1.3"/>
<path d="M758 86 H800" stroke="#b36d62" stroke-width="1.3"/>
<path d="M672 104 V92 C680 88 690 90 700 91 C712 86 724 85 738 88 C750 84 766 86 780 88 C790 87 796 89 801 90 V104Z" fill="#6f7660"/>
<path d="M672 104 V96 C690 93 720 94 750 92 C770 92 790 94 801 95 V104Z" fill="#596150"/>
</g>
<g fill="none" stroke="#d9604b"><circle cx="777.2" cy="41.6" r="5.4" stroke-width="0.8"/><circle cx="777.2" cy="41.6" r="3.2" stroke-width="0.7"/><circle cx="777.2" cy="41.6" r="1.2" stroke-width="0.7"/></g>
<text x="786" y="42.4" font-size="5.6" font-weight="bold" fill="#d9604b" textLength="9.6" lengthAdjust="spacingAndGlyphs" >KM</text>
<text x="786.4" y="47.4" font-size="5.6" font-weight="bold" fill="#d9604b" textLength="8.8" lengthAdjust="spacingAndGlyphs" >UTT</text>
</g>
<rect x="672.6" y="93.3" width="120.4" height="9.6" rx="2" fill="rgba(30,30,28,0.6)"/>
<g transform="translate(675.2,93.4)" stroke="#e0484a" fill="none" stroke-linecap="round"><rect x="2.1" y="0.4" width="2.6" height="5" rx="1.3" fill="#e0484a" stroke="none"/><path d="M0.9 3.8 a2.5 2.5 0 0 0 5 0 M3.4 6.4 V8 M2 8.2 H4.8" stroke-width="0.8"/><path d="M6.4 0.3 L0.5 8.2" stroke-width="1.1"/></g>
<text x="686" y="100.6" font-size="8" font-weight="normal" fill="#ececec" textLength="104.8" lengthAdjust="spacingAndGlyphs" >KMUTT - ATIKAN SRIKASIKORN</text>
<rect x="26.7" y="92.4" width="62.7" height="10.8" rx="2" fill="#2f2f2f"/>
<g transform="translate(29.3,93.4)" stroke="#e0484a" fill="none" stroke-linecap="round"><rect x="2.1" y="0.4" width="2.6" height="5" rx="1.3" fill="#e0484a" stroke="none"/><path d="M0.9 3.8 a2.5 2.5 0 0 0 5 0 M3.4 6.4 V8 M2 8.2 H4.8" stroke-width="0.8"/><path d="M6.4 0.3 L0.5 8.2" stroke-width="1.1"/></g>
<text x="40" y="100.6" font-size="8" font-weight="normal" fill="#ececec" textLength="47.5" lengthAdjust="spacingAndGlyphs" >danai damaau</text>
<rect x="156.4" y="92.6" width="45.4" height="10.4" rx="2" fill="rgba(30,30,30,0.62)"/>
<text x="158.6" y="100.6" font-size="8" font-weight="normal" fill="#ececec" textLength="41.4" lengthAdjust="spacingAndGlyphs" >รศ.ดร. สุพรชัย</text>
<rect x="286.8" y="92.4" width="113.6" height="10.8" rx="2" fill="#2f2f2f"/>
<g transform="translate(289.2,93.4)" stroke="#e0484a" fill="none" stroke-linecap="round"><rect x="2.1" y="0.4" width="2.6" height="5" rx="1.3" fill="#e0484a" stroke="none"/><path d="M0.9 3.8 a2.5 2.5 0 0 0 5 0 M3.4 6.4 V8 M2 8.2 H4.8" stroke-width="0.8"/><path d="M6.4 0.3 L0.5 8.2" stroke-width="1.1"/></g>
<text x="298.6" y="100.6" font-size="8" font-weight="normal" fill="#ececec" textLength="99.8" lengthAdjust="spacingAndGlyphs" >KMUTT - JIRAWAN ONGTANG</text>
<rect x="415.3" y="92.4" width="54.3" height="10.8" rx="2" fill="#2f2f2f"/>
<g transform="translate(418.2,93.4)" stroke="#e0484a" fill="none" stroke-linecap="round"><rect x="2.1" y="0.4" width="2.6" height="5" rx="1.3" fill="#e0484a" stroke="none"/><path d="M0.9 3.8 a2.5 2.5 0 0 0 5 0 M3.4 6.4 V8 M2 8.2 H4.8" stroke-width="0.8"/><path d="M6.4 0.3 L0.5 8.2" stroke-width="1.1"/></g>
<text x="427.8" y="100.6" font-size="8" font-weight="normal" fill="#ececec" textLength="39.9" lengthAdjust="spacingAndGlyphs" >Civil KMUTT</text>
<rect x="544.2" y="92.4" width="62.3" height="10.8" rx="2" fill="#2f2f2f"/>
<text x="546.6" y="100.6" font-size="8" font-weight="normal" fill="#ececec" textLength="57.4" lengthAdjust="spacingAndGlyphs" >นายกันตพล ทองไชย</text>
<text x="62" y="70.8" font-size="9.6" font-weight="bold" fill="#fff" textLength="56.7" lengthAdjust="spacingAndGlyphs" >danai damaau</text>
<text x="311.4" y="70.7" font-size="9.6" font-weight="bold" fill="#fff" textLength="74.4" lengthAdjust="spacingAndGlyphs" >KMUTT - JIRAW...</text>
<text x="453.5" y="70.7" font-size="9.6" font-weight="bold" fill="#fff" textLength="48.7" lengthAdjust="spacingAndGlyphs" >Civil KMUTT</text>
<text x="570.5" y="70.7" font-size="9.6" font-weight="bold" fill="#fff" textLength="74.5" lengthAdjust="spacingAndGlyphs" >นายกันตพล ทองไ...</text>
<text x="185.4" y="593.6" font-size="7.6" font-weight="normal" fill="#d2d2d2" textLength="35.2" lengthAdjust="spacingAndGlyphs" >Participants</text>
<text x="259.6" y="593.6" font-size="7.6" font-weight="normal" fill="#d2d2d2" textLength="13.2" lengthAdjust="spacingAndGlyphs" >Chat</text>
<text x="306.6" y="593.6" font-size="7.6" font-weight="normal" fill="#d2d2d2" textLength="16.8" lengthAdjust="spacingAndGlyphs" >React</text>
<text x="358.4" y="593.6" font-size="7.6" font-weight="normal" fill="#f4f4f4" textLength="16.8" lengthAdjust="spacingAndGlyphs" >Share</text>
<text x="402.8" y="593.6" font-size="7.6" font-weight="normal" fill="#d2d2d2" textLength="30.9" lengthAdjust="spacingAndGlyphs" >Host tools</text>
<text x="445.9" y="593.6" font-size="7.6" font-weight="normal" fill="#d2d2d2" textLength="44.4" lengthAdjust="spacingAndGlyphs" >AI Companion</text>
<text x="510.3" y="593.6" font-size="7.6" font-weight="normal" fill="#d2d2d2" textLength="14.9" lengthAdjust="spacingAndGlyphs" >Apps</text>
<text x="546" y="594.4" font-size="7.6" font-weight="normal" fill="#d2d2d2" textLength="64.2" lengthAdjust="spacingAndGlyphs" >Pause/stop recording</text>
<text x="619.9" y="593.6" font-size="7.6" font-weight="normal" fill="#d2d2d2" textLength="48.7" lengthAdjust="spacingAndGlyphs" >Breakout rooms</text>
<text x="689.3" y="593.6" font-size="7.6" font-weight="normal" fill="#d2d2d2" textLength="16" lengthAdjust="spacingAndGlyphs" >More</text>
<text x="211.9" y="580.4" font-size="7" font-weight="normal" fill="#b4b4b4" textLength="8.6" lengthAdjust="spacingAndGlyphs" >99</text>
<path d="M231 580 l2.3 -2.4 l2.3 2.4" fill="none" stroke="#e8e8e8" stroke-width="1.3" stroke-linecap="round" stroke-linejoin="round"/>
<path d="M282.8 580 l2.3 -2.4 l2.3 2.4" fill="none" stroke="#e8e8e8" stroke-width="1.3" stroke-linecap="round" stroke-linejoin="round"/>
<path d="M329.2 580 l2.3 -2.4 l2.3 2.4" fill="none" stroke="#e8e8e8" stroke-width="1.3" stroke-linecap="round" stroke-linejoin="round"/>
<path d="M385.7 580 l2.3 -2.4 l2.3 2.4" fill="none" stroke="#e8e8e8" stroke-width="1.3" stroke-linecap="round" stroke-linejoin="round"/>
<path d="M531.8 580 l2.3 -2.4 l2.3 2.4" fill="none" stroke="#e8e8e8" stroke-width="1.3" stroke-linecap="round" stroke-linejoin="round"/>
<g fill="none" stroke="#f0f0f0" stroke-width="1.15">
<circle cx="201.2" cy="576.6" r="2.1"/><path d="M197.6 584 v-1.6 a2.2 2.2 0 0 1 2.2 -2.2 h2.8 a2.2 2.2 0 0 1 2.2 2.2 v1.6 z"/>
<circle cx="206.6" cy="578" r="1.6"/><path d="M206.3 584 h3 v-1.4 a1.8 1.8 0 0 0 -1.8 -1.8 h-1.2"/>
</g>
<g fill="none" stroke="#f0f0f0" stroke-width="1.15" stroke-linejoin="round">
<path d="M263.4 575 a2 2 0 0 1 2 -2 h5 a2 2 0 0 1 2 2 v4.4 a2 2 0 0 1 -1.6 1.9"/>
<path d="M261.9 575.6 h6.6 a2 2 0 0 1 2 2 v3.6 a2 2 0 0 1 -2 2 h-4.3 l-2.4 1.7 v-1.8 a2 2 0 0 1 -1.9 -2 v-3.5 a2 2 0 0 1 2 -2z" fill="#444"/>
</g>
<circle cx="263.2" cy="579.5" r="0.6" fill="#f0f0f0"/>
<circle cx="265.2" cy="579.5" r="0.6" fill="#f0f0f0"/>
<circle cx="267.2" cy="579.5" r="0.6" fill="#f0f0f0"/>
<path d="M315.4 584.6 C312 582 308.6 579.6 308.6 576.8 C308.6 574.8 310.1 573.6 311.8 573.6 C313.3 573.6 314.6 574.4 315.4 575.8 C316.2 574.4 317.5 573.6 319 573.6 C320.7 573.6 322.2 574.8 322.2 576.8 C322.2 579.6 318.8 582 315.4 584.6Z" fill="none" stroke="#f0f0f0" stroke-width="1.15" stroke-linejoin="round"/>
<rect x="359.7" y="572.8" width="14.1" height="11.2" rx="2" fill="#23d782"/>
<path d="M366.75 581.4 V576.2 M364.2 578.3 L366.75 575.7 L369.3 578.3" fill="none" stroke="#0b2a18" stroke-width="1.5" stroke-linecap="round" stroke-linejoin="round"/>
<path d="M418.4 573 L424 574.8 V578.6 C424 581.6 421.4 583.8 418.4 584.9 C415.4 583.8 412.8 581.6 412.8 578.6 V574.8Z" fill="none" stroke="#f0f0f0" stroke-width="1.15" stroke-linejoin="round"/>
<path d="M418.4 575.4 L421.9 576.5 V578.8 H418.4Z M418.4 578.8 V582.6 C416.6 581.8 415 580.6 414.9 578.8Z" fill="#f0f0f0"/>
<path d="M467 571.8 C468 575.6 469.6 577.4 473.6 578.6 C469.6 579.8 468 581.6 467 585.4 C466 581.6 464.4 579.8 460.4 578.6 C464.4 577.4 466 575.6 467 571.8Z" fill="#c4e6f5"/>
<circle cx="472.2" cy="573.8" r="1.2" fill="#eaf6fb"/>
<g fill="none" stroke="#f0f0f0" stroke-width="1.15" stroke-linecap="round">
<path d="M512 576.6 v-2 a2 2 0 0 1 2 -2 h2"/><path d="M524.2 580.6 v2 a2 2 0 0 1 -2 2 h-2"/>
<circle cx="521.8" cy="575" r="2.3"/><circle cx="514.4" cy="582.2" r="2.3"/>
</g>
<g fill="none" stroke="#f0f0f0" stroke-width="1.15">
<rect x="565" y="572" width="12" height="12.6" rx="2.6"/><rect x="579.9" y="572" width="12" height="12.6" rx="2.6"/></g>
<rect x="568.8" y="575.6" width="1.5" height="5.4" fill="#f0f0f0"/><rect x="571.7" y="575.6" width="1.5" height="5.4" fill="#f0f0f0"/>
<rect x="583.6" y="576" width="4.6" height="4.6" rx="0.6" fill="#f0f0f0"/>
<rect x="637.2" y="571.5" width="6.8" height="6.6" rx="0.5" fill="#f6f6f6"/>
<rect x="644.9" y="571.5" width="6.8" height="6.6" rx="0.5" fill="#f6f6f6"/>
<rect x="637.2" y="579" width="6.8" height="6.6" rx="0.5" fill="#f6f6f6"/>
<rect x="644.9" y="579" width="6.8" height="6.6" rx="0.5" fill="#f6f6f6"/>
<circle cx="697" cy="578.6" r="6.9" fill="none" stroke="#f0f0f0" stroke-width="1.15"/>
<circle cx="694" cy="578.6" r="0.85" fill="#f0f0f0"/>
<circle cx="697" cy="578.6" r="0.85" fill="#f0f0f0"/>
<circle cx="700" cy="578.6" r="0.85" fill="#f0f0f0"/>
<circle cx="818.8" cy="68" r="9.3" fill="#fff"/><circle cx="818.8" cy="68" r="7.7" fill="#1f74e8"/>
<path d="M817.2 64.2 l3.6 3.8 l-3.6 3.8" fill="none" stroke="#fff" stroke-width="1.5" stroke-linecap="round" stroke-linejoin="round"/>
</g>
<!--UI_END-->
  </svg>
</div>
</body>
</html>
